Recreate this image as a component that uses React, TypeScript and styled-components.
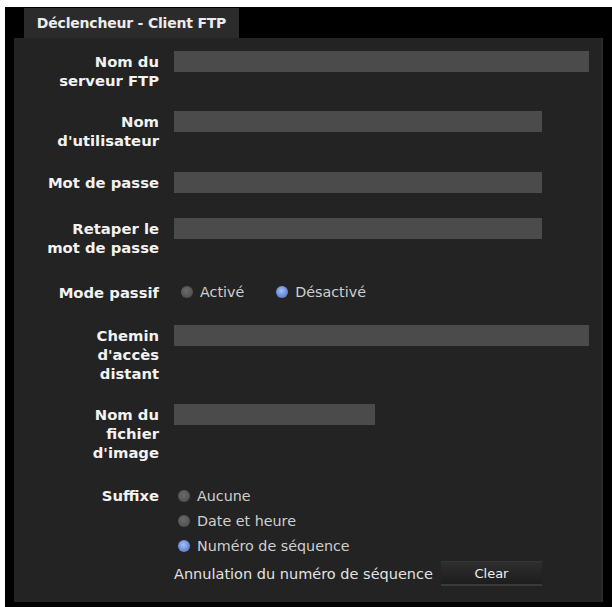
import styled, { createGlobalStyle } from "styled-components";

const GlobalStyle = createGlobalStyle`
  html, body {
    margin: 0;
    padding: 0;
    background: #ffffff;
  }
  body {
    font-family: "DejaVu Sans", Verdana, sans-serif;
  }
`;

const Frame = styled.div`
  margin: 7px 0 0 5px;
  width: 607px;
  height: 600px;
  background: #000000;
  padding: 1px 9px 5px 9px;
  box-sizing: border-box;
  display: flex;
  flex-direction: column;
`;

const TabBar = styled.div`
  display: flex;
  padding-left: 10px;
`;

const Tab = styled.div`
  width: 215px;
  height: 30px;
  background: #2b2b2b;
  color: #ececec;
  font-weight: bold;
  font-size: 14px;
  display: flex;
  align-items: center;
  justify-content: center;
  letter-spacing: -0.2px;
`;

const Panel = styled.div`
  flex: 1;
  min-height: 0;
  background: #232323;
  border-right: 2px solid #2a2a2a;
  padding: 13px 0 0 14px;
  display: flex;
  flex-direction: column;
`;

const Row = styled.div<{ $gap?: number; $center?: boolean }>`
  display: grid;
  grid-template-columns: 131px 1fr;
  column-gap: 15px;
  align-items: ${(p) => (p.$center ? "center" : "start")};
  margin-bottom: ${(p) => p.$gap ?? 21}px;
`;

const Label = styled.div<{ $lh?: number }>`
  text-align: right;
  color: #f2f2f2;
  font-weight: bold;
  font-size: 14.8px;
  line-height: ${(p) => p.$lh ?? 19}px;
  margin-top: ${(p) => (p.$lh ? 0 : 1)}px;
`;

const Field = styled.div<{ $width: number }>`
  width: ${(p) => p.$width}px;
  height: 21px;
  background: #4b4b4b;
`;

const RadioGroup = styled.div<{ $column?: boolean }>`
  display: flex;
  flex-direction: ${(p) => (p.$column ? "column" : "row")};
  gap: ${(p) => (p.$column ? 0 : 32)}px;
  margin-left: ${(p) => (p.$column ? 4 : 7)}px;
`;

const RadioItem = styled.div<{ $height?: number }>`
  display: flex;
  align-items: center;
  gap: 7px;
  height: ${(p) => p.$height ?? 21}px;
  color: #cfcfcf;
  font-size: 14.3px;
`;

const Dot = styled.span<{ $on?: boolean }>`
  width: 12px;
  height: 12px;
  border-radius: 50%;
  flex-shrink: 0;
  background: ${(p) =>
    p.$on
      ? "radial-gradient(circle at 45% 40%, #a8c0f4 0%, #6b8ddb 55%, #4d6fbd 100%)"
      : "radial-gradient(circle at 45% 40%, #6a6a6a 0%, #555555 60%, #444444 100%)"};
`;

const ResetLine = styled.div`
  display: flex;
  align-items: center;
  gap: 8px;
  margin-top: 3px;
  color: #e2e2e2;
  font-size: 14.5px;
`;

const ClearButton = styled.button`
  width: 101px;
  height: 25px;
  border: none;
  border-top: 1px solid #353535;
  border-bottom: 2px solid #3a3a3a;
  background: linear-gradient(#2e2e2e, #1d1d1d);
  color: #eeeeee;
  font-family: "DejaVu Sans", Verdana, sans-serif;
  font-size: 13px;
  padding: 0;
`;

export default function App() {
  return (
    <>
      <GlobalStyle />
      <Frame>
        <TabBar>
          <Tab>Déclencheur - Client FTP</Tab>
        </TabBar>
        <Panel>
          <Row $gap={21}>
            <Label>
              Nom du
              <br />
              serveur FTP
            </Label>
            <Field $width={415} />
          </Row>
          <Row $gap={22}>
            <Label>
              Nom
              <br />
              d'utilisateur
            </Label>
            <Field $width={368} />
          </Row>
          <Row $gap={25}>
            <Label>Mot de passe</Label>
            <Field $width={368} />
          </Row>
          <Row $gap={24}>
            <Label>
              Retaper le
              <br />
              mot de passe
            </Label>
            <Field $width={368} />
          </Row>
          <Row $center $gap={23}>
            <Label>Mode passif</Label>
            <RadioGroup>
              <RadioItem>
                <Dot />
                Activé
              </RadioItem>
              <RadioItem>
                <Dot $on />
                Désactivé
              </RadioItem>
            </RadioGroup>
          </Row>
          <Row $gap={21}>
            <Label>
              Chemin
              <br />
              d'accès
              <br />
              distant
            </Label>
            <Field $width={415} />
          </Row>
          <Row $gap={21}>
            <Label>
              Nom du
              <br />
              fichier
              <br />
              d'image
            </Label>
            <Field $width={201} />
          </Row>
          <Row $gap={0}>
            <Label $lh={25}>Suffixe</Label>
            <div>
              <RadioGroup $column>
                <RadioItem $height={25}>
                  <Dot />
                  Aucune
                </RadioItem>
                <RadioItem $height={25}>
                  <Dot />
                  Date et heure
                </RadioItem>
                <RadioItem $height={25}>
                  <Dot $on />
                  Numéro de séquence
                </RadioItem>
              </RadioGroup>
              <ResetLine>
                Annulation du numéro de séquence
                <ClearButton>Clear</ClearButton>
              </ResetLine>
            </div>
          </Row>
        </Panel>
      </Frame>
    </>
  );
}
